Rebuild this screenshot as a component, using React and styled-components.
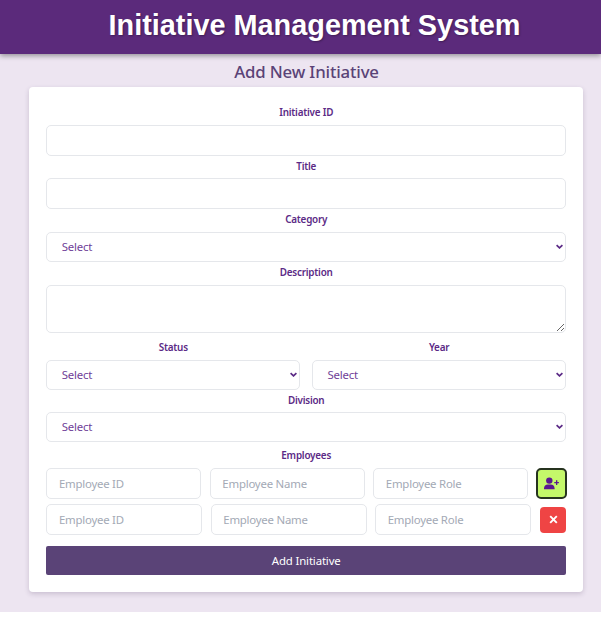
import React from "react";
import styled, { createGlobalStyle } from "styled-components";

const GlobalStyle = createGlobalStyle`
  *, *::before, *::after { box-sizing: border-box; }
  body { margin: 0; background: #fff; font-family: "Noto Sans", "Open Sans", sans-serif; }
  input, select, textarea, button { font: inherit; margin: 0; }
`;

const Page = styled.div`
  height: 612px;
  background: #ede5f1;
  overflow: hidden;
`;

const Header = styled.header`
  height: 54px;
  background: #5b2a7b;
  box-shadow: 0 2px 5px rgba(0, 0, 0, 0.36);
  padding-left: 28px;
  text-align: center;
`;

const Brand = styled.h1`
  margin: 0;
  font: 700 28.85px/50px "Liberation Sans", Arial, sans-serif;
  color: #fff;
  text-shadow: 1px 1px 2px rgba(0, 0, 0, 0.3);
  white-space: nowrap;
`;

const Heading = styled.h2`
  margin: 0;
  height: 33px;
  padding-left: 12px;
  font-size: 16.8px;
  font-weight: 500;
  line-height: 35px;
  letter-spacing: -0.15px;
  text-align: center;
  color: #5a4377;
`;

const Card = styled.form`
  margin: 0 18px 0 29px;
  height: 505px;
  padding: 12px 17px 0 17.4px;
  background: #fff;
  border-radius: 4px;
  box-shadow: 0 2px 5px rgba(60, 40, 80, 0.2);
`;

const Label = styled.label`
  display: block;
  height: ${(p) => p.$height}px;
  line-height: ${(p) => p.$line || p.$height}px;
  font-size: 9.9px;
  font-weight: 600;
  letter-spacing: -0.22px;
  text-align: center;
  color: #5b2a86;
`;

const Input = styled.input`
  display: block;
  width: 100%;
  min-width: 0;
  height: 31px;
  padding: 0 11.5px 1px;
  border: 1px solid #e5e7eb;
  border-radius: 5px;
  background: #fff;
  font-size: 11.4px;
  letter-spacing: -0.22px;
  outline: none;
  &::placeholder { color: #a3a9b5; opacity: 1; }
`;

const TextArea = styled.textarea`
  display: block;
  width: 100%;
  height: 48px;
  border: 1px solid #e5e7eb;
  border-radius: 5px;
  outline: none;
  resize: vertical;
`;

const SelectBox = styled.div`
  position: relative;
  height: 30px;
`;

const SelectControl = styled.select`
  appearance: none;
  width: 100%;
  height: 100%;
  padding: 0 14.3px 1px;
  border: 1px solid #e5e7eb;
  border-radius: 5px;
  background: #fff;
  color: #6f3f98;
  font-size: 11.4px;
  letter-spacing: -0.2px;
  outline: none;
`;

const Arrow = styled.svg`
  position: absolute;
  right: 3px;
  top: 12px;
  width: 7px;
  height: 5px;
  pointer-events: none;
`;

const Pair = styled.div`
  display: grid;
  grid-template-columns: 1fr 1fr;
  column-gap: 12px;
`;

const EmployeeRow = styled.div`
  display: flex;
  align-items: center;
  gap: 8.4px;
  height: 31px;
  margin-bottom: ${(p) => p.$after}px;
`;

const IconButton = styled.button`
  flex: none;
  display: flex;
  align-items: center;
  justify-content: center;
  padding: 0;
  border: 0;
`;

const AddButton = styled(IconButton)`
  width: 31px;
  height: 31px;
  margin-right: -1px;
  margin-left: -0.8px;
  border: 2px solid #26331f;
  border-radius: 5px;
  background: #c4f86a;
`;

const RemoveButton = styled(IconButton)`
  width: 26px;
  height: 26px;
  margin-left: 0.5px;
  border-radius: 4px;
  background: #ef4444;
`;

const Submit = styled.button`
  display: block;
  width: 100%;
  height: 29px;
  padding: 0;
  border: 0;
  border-radius: 2px;
  background: #5a4377;
  color: #fff;
  font-size: 11.4px;
  letter-spacing: -0.15px;
`;

function Select() {
  return (
    <SelectBox>
      <SelectControl>
        <option>Select</option>
      </SelectControl>
      <Arrow viewBox="0 0 7 5">
        <path d="M0.6 1.2 3.5 3.9 6.4 1.2" fill="none" stroke="#5b2a86" strokeWidth="1.7" />
      </Arrow>
    </SelectBox>
  );
}

function EmployeeFields() {
  return (
    <>
      <Input placeholder="Employee ID" />
      <Input placeholder="Employee Name" />
      <Input placeholder="Employee Role" />
    </>
  );
}

export default function App() {
  return (
    <>
      <GlobalStyle />
      <Page>
        <Header>
          <Brand>Initiative Management System</Brand>
        </Header>
        <Heading>Add New Initiative</Heading>
        <Card>
          <Label $height={26} $line={27}>Initiative ID</Label>
          <Input />
          <Label $height={22} $line={21}>Title</Label>
          <Input />
          <Label $height={23} $line={21}>Category</Label>
          <Select />
          <Label $height={23} $line={21}>Description</Label>
          <TextArea />
          <Pair>
            <div>
              <Label $height={27} $line={29}>Status</Label>
              <Select />
            </div>
            <div>
              <Label $height={27} $line={29}>Year</Label>
              <Select />
            </div>
          </Pair>
          <Label $height={22} $line={21}>Division</Label>
          <Select />
          <Label $height={26} $line={27}>Employees</Label>
          <EmployeeRow $after={5}>
            <EmployeeFields />
            <AddButton type="button" aria-label="Add employee">
              <svg width="15" height="13" viewBox="0 0 15 13" fill="#5a1690">
                <circle cx="5.3" cy="3.6" r="3.2" />
                <path d="M0 12.3v-0.8c0-2.3 1.7-3.9 3.8-3.9h3c2.1 0 3.8 1.6 3.8 3.9v0.8z" />
                <path d="M12 3.2h1.3v1.7h1.6v1.3h-1.6v1.7h-1.3v-1.7h-1.7v-1.3h1.7z" />
              </svg>
            </AddButton>
          </EmployeeRow>
          <EmployeeRow $after={11}>
            <EmployeeFields />
            <RemoveButton type="button" aria-label="Remove employee">
              <svg width="9" height="9" viewBox="0 0 9 9">
                <path d="M1.2 1.2 7.8 7.8M7.8 1.2 1.2 7.8" fill="none" stroke="#fff" strokeWidth="1.9" />
              </svg>
            </RemoveButton>
          </EmployeeRow>
          <Submit type="button">Add Initiative</Submit>
        </Card>
      </Page>
    </>
  );
}
